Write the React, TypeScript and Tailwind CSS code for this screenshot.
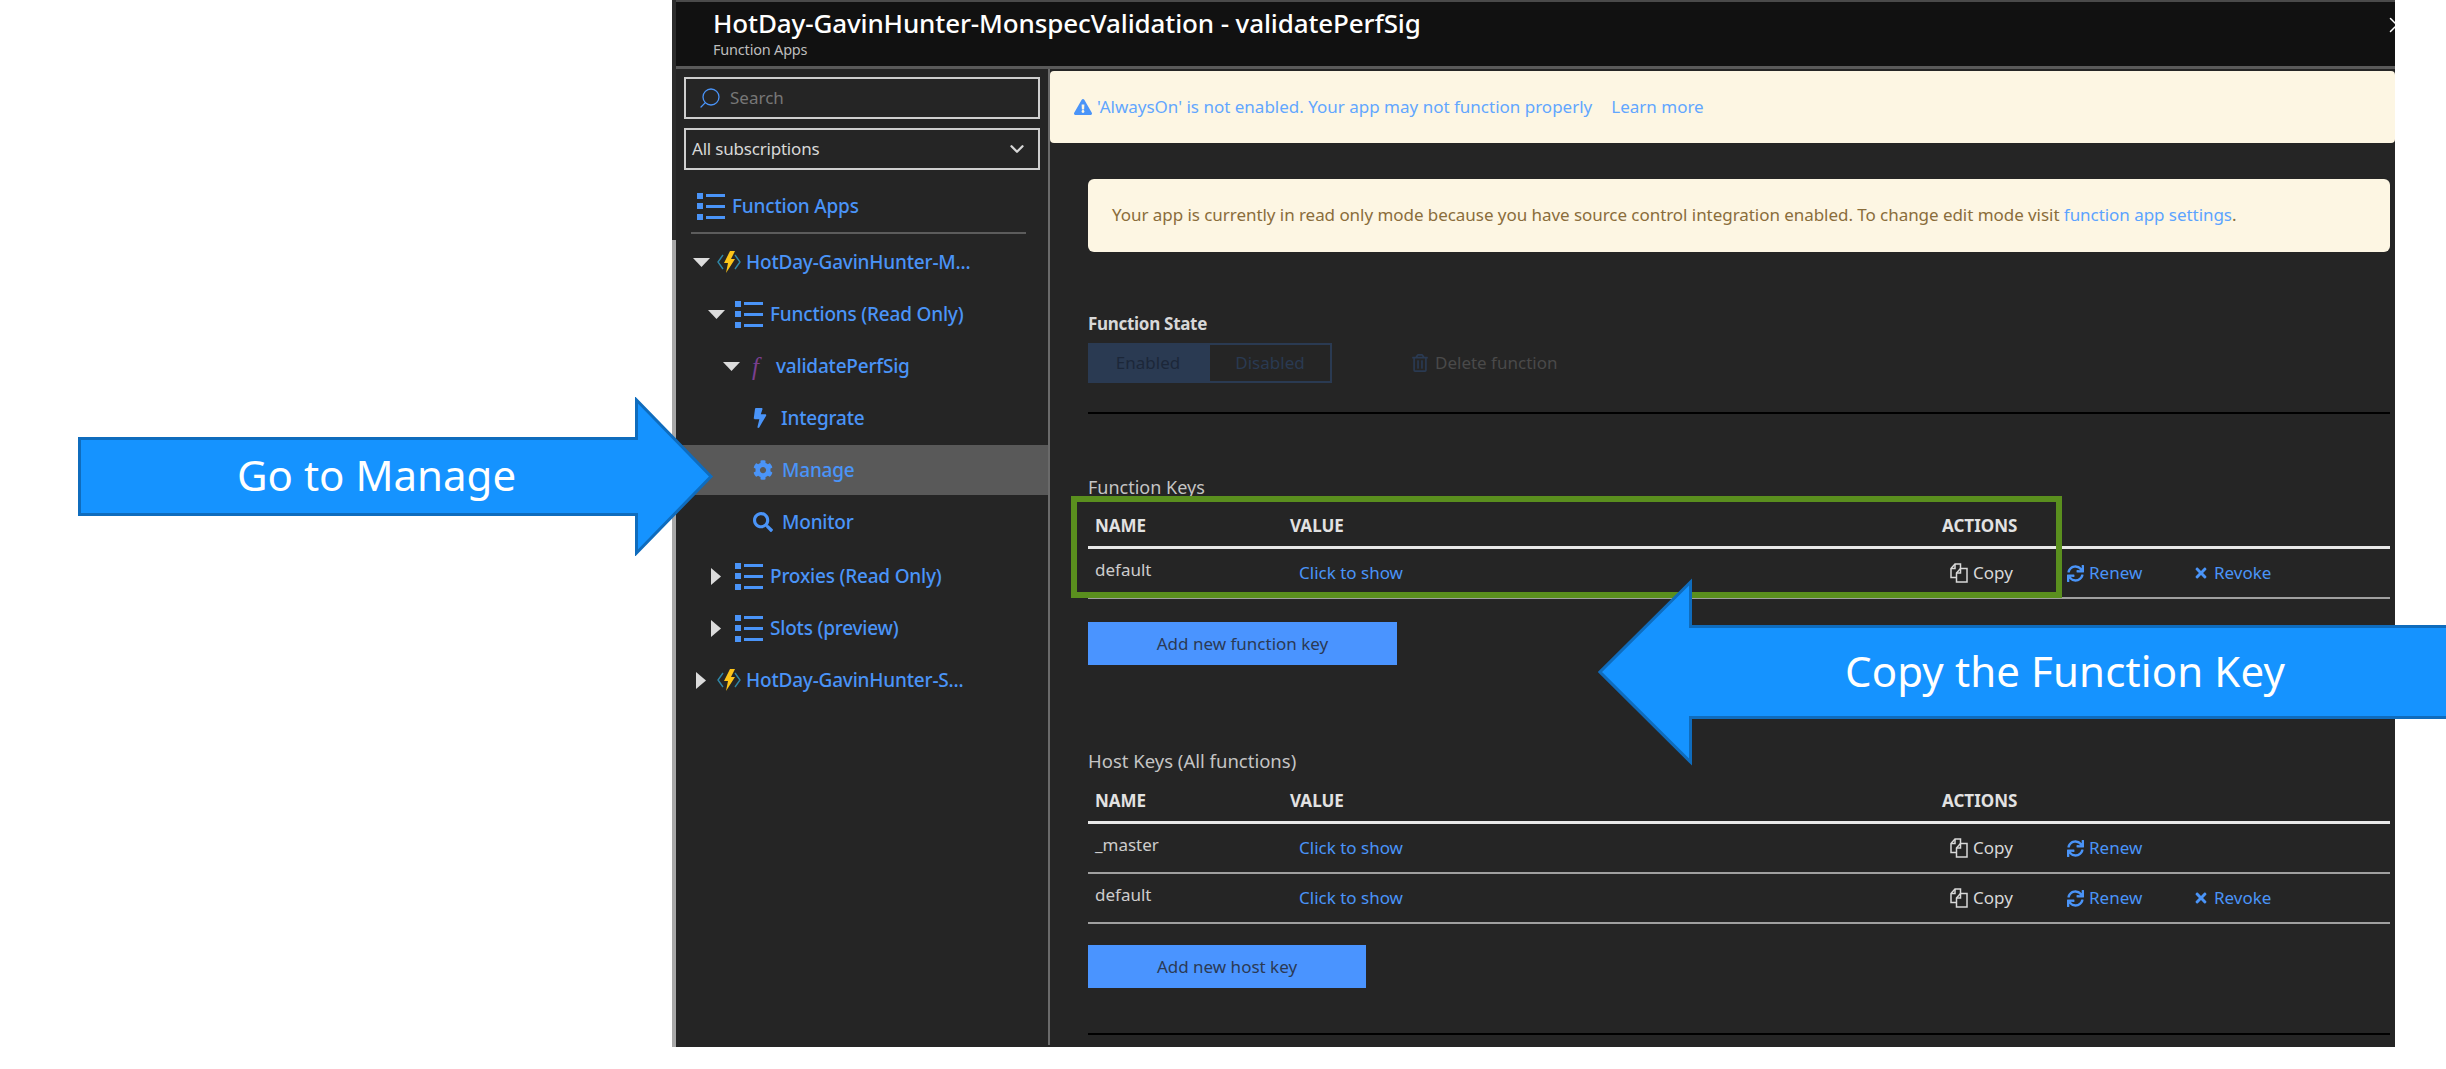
import React from "react";
import { ChevronDown, Search, X } from "lucide-react";
import { FaBolt, FaCog, FaExclamationTriangle, FaSearch, FaSync, FaTimes, FaRegTrashAlt } from "react-icons/fa";

const BLUE = "text-[#4a94f8]";

function ListIcon() {
  return (
    <svg width="28" height="27" viewBox="0 0 28 27" className="shrink-0 text-[#4a94f8]" fill="currentColor">
      <rect x="0" y="0" width="6" height="6" />
      <rect x="9" y="1" width="19" height="3" />
      <rect x="0" y="10" width="6" height="6" />
      <rect x="9" y="12" width="19" height="3" />
      <rect x="0" y="21" width="6" height="6" />
      <rect x="9" y="23" width="19" height="3" />
    </svg>
  );
}

function AppIcon() {
  return (
    <svg width="24" height="24" viewBox="0 0 24 24" className="shrink-0" fill="none">
      <path d="M6 5 L1 12 L6 19" stroke="#2f87a8" strokeWidth="1.4" />
      <path d="M18 5 L23 12 L18 19" stroke="#2f87a8" strokeWidth="1.4" />
      <path d="M13 1 L18 1 L14 9 L18 9 L9 23 L11 13 L7 13 Z" fill="#fcc419" />
    </svg>
  );
}

function PagesIcon() {
  return (
    <svg width="18" height="20" viewBox="0 0 18 20" className="shrink-0" fill="none" stroke="currentColor" strokeWidth="1.5">
      <path d="M6 14.5 H1 V5.5 L5 1 H10.5 V5.5" />
      <path d="M5 1 V5.5 H1" />
      <path d="M6.5 19 V10 L10.5 5.5 H17 V19 Z" />
      <path d="M10.5 5.5 V10 H6.5" />
    </svg>
  );
}

function Caret({ open }: { open: boolean }) {
  return open ? (
    <svg width="17" height="10" viewBox="0 0 17 10" className="shrink-0">
      <path d="M0 1 H17 L8.5 10 Z" fill="#dcdcdc" />
    </svg>
  ) : (
    <svg width="10" height="17" viewBox="0 0 10 17" className="shrink-0">
      <path d="M0 0 V17 L10 8.5 Z" fill="#dcdcdc" />
    </svg>
  );
}

function TreeRow({ className, children }: { className: string; children: React.ReactNode }) {
  return <div className={`flex items-center h-[52px] ${className}`}>{children}</div>;
}

function Label({ children }: { children: React.ReactNode }) {
  return <span className={`text-[19px] font-medium tracking-[-0.2px] whitespace-nowrap ${BLUE}`}>{children}</span>;
}

function Sidebar() {
  return (
    <div className="w-[374px] shrink-0 border-r-2 border-[#6a6a6a] pt-2">
      <div className="mx-2 h-[42px] border-2 border-[#cfcfcf] flex items-center pl-[12px]">
        <Search size={24} strokeWidth={1.3} className="-scale-x-100 text-[#4a94f8]" />
        <span className="ml-[8px] text-[17px] text-[#777]">Search</span>
      </div>
      <div className="mx-2 mt-[9px] h-[42px] border-2 border-[#cfcfcf] flex items-center justify-between pl-[6px] pr-[10px]">
        <span className="text-[17px] text-[#d8d8d8] tracking-[-0.2px]">All subscriptions</span>
        <ChevronDown size={22} strokeWidth={2.5} className="text-[#d8d8d8]" />
      </div>
      <TreeRow className="mt-[10px] pl-[21px] gap-[7px]">
        <ListIcon />
        <Label>Function Apps</Label>
      </TreeRow>
      <div className="ml-[15px] w-[335px] h-[2px] bg-[#5c5c5c]" />
      <div className="mt-[2px]">
        <TreeRow className="pl-[17px]">
          <Caret open />
          <span className="ml-[7px] mr-[5px]"><AppIcon /></span>
          <Label>HotDay-GavinHunter-M...</Label>
        </TreeRow>
        <TreeRow className="pl-[32px]">
          <Caret open />
          <span className="ml-[10px] mr-[7px]"><ListIcon /></span>
          <Label>Functions (Read Only)</Label>
        </TreeRow>
        <TreeRow className="pl-[47px]">
          <Caret open />
          <span className="ml-[12px] w-[24px] text-[25px] leading-none italic text-[#7a3f8f] font-['Liberation_Serif',serif]">f</span>
          <Label>validatePerfSig</Label>
        </TreeRow>
        <TreeRow className="pl-[77px]">
          <FaBolt size={20} className="text-[#4a94f8] w-[14px]" />
          <span className="ml-[14px]"><Label>Integrate</Label></span>
        </TreeRow>
        <TreeRow className="pl-[77px] !h-[50px] my-px bg-[#595959]">
          <FaCog size={20} className="text-[#4a94f8]" />
          <span className="ml-[9px]"><Label>Manage</Label></span>
        </TreeRow>
        <TreeRow className="pl-[77px]">
          <FaSearch size={20} className="text-[#4a94f8]" />
          <span className="ml-[9px]"><Label>Monitor</Label></span>
        </TreeRow>
        <TreeRow className="pl-[35px] mt-[2px]">
          <Caret open={false} />
          <span className="ml-[14px] mr-[7px]"><ListIcon /></span>
          <Label>Proxies (Read Only)</Label>
        </TreeRow>
        <TreeRow className="pl-[35px]">
          <Caret open={false} />
          <span className="ml-[14px] mr-[7px]"><ListIcon /></span>
          <Label>Slots (preview)</Label>
        </TreeRow>
        <TreeRow className="pl-[20px]">
          <Caret open={false} />
          <span className="ml-[11px] mr-[5px]"><AppIcon /></span>
          <Label>HotDay-GavinHunter-S...</Label>
        </TreeRow>
      </div>
    </div>
  );
}

function ActionLink({ icon, label, className }: { icon: React.ReactNode; label: string; className: string }) {
  return (
    <span className={`flex items-center gap-[5px] text-[17px] ${className}`}>
      {icon}
      {label}
    </span>
  );
}

function KeyRow({ name, revoke, renew = true }: { name: string; revoke: boolean; renew?: boolean }) {
  return (
    <div className="flex items-center h-[50px] border-b-2 border-[#a0a0a0]">
      <span className="w-[202px] pl-[7px] pb-[6px] text-[17px] text-[#cdcdcd]">{name}</span>
      <span className={`w-[660px] pl-[9px] text-[17px] ${BLUE}`}>Click to show</span>
      <span className="w-[117px]">
        <ActionLink icon={<PagesIcon />} label="Copy" className="text-[#d8d8d8]" />
      </span>
      {renew && (
        <span className="w-[126px]">
          <ActionLink icon={<FaSync size={17} />} label="Renew" className={BLUE} />
        </span>
      )}
      {revoke && <ActionLink icon={<FaTimes size={16} />} label="Revoke" className={BLUE} />}
    </div>
  );
}

function KeyHeader() {
  return (
    <div className="flex items-center h-[46px] pt-[2px] border-b-[3px] border-[#e8e8e8] text-[17px] font-bold text-[#e2e2e2]">
      <span className="w-[202px] pl-[7px]">NAME</span>
      <span className="w-[652px]">VALUE</span>
      <span>ACTIONS</span>
    </div>
  );
}

function AddButton({ label, className }: { label: string; className: string }) {
  return (
    <div className={`h-[43px] bg-[#4a94ff] flex items-center justify-center text-[17px] text-[#2b3a55] ${className}`}>
      {label}
    </div>
  );
}

function Content() {
  return (
    <div className="flex-1 min-w-0">
      <div className="mt-[2px] h-[72px] bg-[#fdf6e3] rounded-[4px] flex items-center pl-[24px] text-[17px] text-[#62a6ff]">
        <FaExclamationTriangle size={18} className="text-[#4a94f8] mr-[5px]" />
        <span>'AlwaysOn' is not enabled. Your app may not function properly</span>
        <span className="ml-[19px]">Learn more</span>
      </div>
      <div className="pl-[38px] pr-[5px]">
        <div className="mt-[36px] h-[73px] bg-[#fdf6e3] rounded-[6px] pt-[23px] pl-[24px] text-[17px] leading-[26px] tracking-[-0.05px] text-[#8a6d3b] whitespace-nowrap">
          Your app is currently in read only mode because you have source control integration enabled. To change edit mode visit <span className="text-[#5ba3ff]">function app settings</span>.
        </div>
        <div className="mt-[61px] text-[17px] leading-[22px] font-bold text-[#d8d8d8] tracking-[-0.3px]">Function State</div>
        <div className="mt-[8px] pb-[29px] border-b-2 border-black flex items-center">
          <div className="w-[120px] h-[40px] bg-[#2a3a52] flex items-center justify-center text-[17px] text-[#1c2739]">Enabled</div>
          <div className="w-[124px] h-[40px] border-2 border-[#2a3a52] flex items-center justify-center text-[17px] text-[#2a3a52]">Disabled</div>
          <FaRegTrashAlt size={18} className="ml-[79px] text-[#2a3a52]" />
          <span className="ml-[6px] text-[17px] text-[#4a4a4a]">Delete function</span>
        </div>

        <div className="mt-[62px] text-[18px] leading-[22px] text-[#c4c4c4]">Function Keys</div>
        <div className="mt-[5px]">
          <KeyHeader />
          <KeyRow name="default" revoke />
        </div>
        <AddButton label="Add new function key" className="mt-[23px] w-[309px]" />

        <div className="mt-[85px] text-[18.5px] leading-[22px] text-[#c4c4c4]">Host Keys (All functions)</div>
        <div className="mt-[6px]">
          <KeyHeader />
          <KeyRow name="_master" revoke={false} />
          <KeyRow name="default" revoke />
        </div>
        <AddButton label="Add new host key" className="mt-[21px] w-[278px]" />
        <div className="mt-[45px] h-[2px] bg-black" />
      </div>
    </div>
  );
}

export default function App() {
  return (
    <div className="relative w-[2446px] h-[1069px] bg-white overflow-hidden font-['Noto_Sans',sans-serif]">
      <div className="ml-[672px] w-[1723px] h-[1047px] bg-[#252525] border-l-4 border-[#2c2c2c]">
        <div className="relative h-[69px] bg-[#111111] border-t-2 border-b-[3px] border-t-[#4a4a4a] border-b-[#5a5a5a] pl-[37px] overflow-hidden">
          <div className="text-[26px] leading-[32px] mt-[5px] font-medium text-white tracking-[-0.12px] whitespace-nowrap">
            HotDay-GavinHunter-MonspecValidation - validatePerfSig
          </div>
          <div className="text-[14.5px] leading-[20px] text-[#bdbdbd] tracking-[-0.2px]">Function Apps</div>
          <X size={26} strokeWidth={1.4} className="absolute right-[-15px] top-[10px] text-white" />
        </div>
        <div className="flex h-[976px]">
          <Sidebar />
          <Content />
        </div>
      </div>

      {/* left edge of the blade turns light below the search boxes */}
      <div className="absolute left-[672px] top-[240px] w-[4px] h-[807px] bg-[#a8a8a8]" />

      {/* green highlight round the function key */}
      <div className="absolute left-[1071px] top-[496px] w-[991px] h-[102px] border-[6px] border-[#5a8f1e]" />

      {/* callout: go to manage */}
      <div className="absolute left-[78px] top-[397px] w-[636px] h-[159px]">
        <svg width="636" height="159" viewBox="0 0 636 159" className="absolute inset-0">
          <path d="M1.5 41.5 H558.5 V3 L633 79.5 L558.5 156 V117.5 H1.5 Z" fill="#1593ff" stroke="#0f6cbd" strokeWidth="3" />
        </svg>
        <div className="absolute left-[159px] top-[53px] text-[42px] leading-[50px] text-white whitespace-nowrap">Go to Manage</div>
      </div>

      {/* callout: copy the key */}
      <div className="absolute left-[1598px] top-[578px] w-[848px] h-[188px]">
        <svg width="848" height="188" viewBox="0 0 848 188" className="absolute inset-0">
          <path d="M850 48.5 H92.5 V4 L2 94 L92.5 184 V139.5 H850 Z" fill="#1593ff" stroke="#0f6cbd" strokeWidth="3" />
        </svg>
        <div className="absolute left-[247px] top-[68px] text-[42px] leading-[50px] tracking-[0.12px] text-white whitespace-nowrap">Copy the Function Key</div>
      </div>
    </div>
  );
}
